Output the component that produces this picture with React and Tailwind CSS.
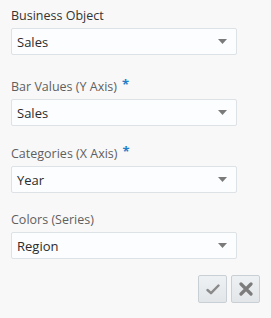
export default function App() {
  const Field = ({ label, value, required, dark, className }) => (
    <div className={className}>
      <div
        className={`flex items-start text-[12.5px] leading-[17px] ${dark ? "text-[#333333]" : "text-[#5f5f5f]"}`}
      >
        <span>{label}</span>
        {required && <span className="ml-[5px] text-[#1f7fc8] text-[13px] leading-[13px] font-bold">*</span>}
      </div>
      <div className="mt-[4px] w-[226px] h-[27px] bg-[#fcfdff] border border-[#dde2e6] rounded-[2px] flex items-center justify-between pl-[5px] pr-[9px]">
        <span className="text-[13px] text-[#2b2b2b] leading-[18px]">{value}</span>
        <svg width="9" height="5" viewBox="0 0 9 5">
          <path d="M0 0 L9 0 L4.5 5 Z" fill="#7a7a7a" />
        </svg>
      </div>
    </div>
  );

  return (
    <div
      className="w-[271px] h-[318px] bg-[#f8f8f8] pl-[11px] pt-[7px]"
      style={{ fontFamily: '"Open Sans", "Noto Sans", sans-serif' }}
    >
      <Field label="Business Object" value="Sales" dark />
      <Field className="mt-[23px]" label="Bar Values (Y Axis)" value="Sales" required />
      <Field className="mt-[19px]" label="Categories (X Axis)" value="Year" required />
      <Field className="mt-[18px]" label="Colors (Series)" value="Region" />
      <div className="flex justify-end gap-[4px] w-[249px] mt-[16px]">
        <button className="w-[29px] h-[28px] rounded-[2px] border border-[#c9d0d5] bg-gradient-to-b from-[#eef1f3] to-[#e2e6e9] flex items-center justify-center">
          <svg width="14" height="11" viewBox="0 0 14 11">
            <path d="M1.5 6 L5 9.2 L12.5 1.5" fill="none" stroke="#8a8a8a" strokeWidth="2.4" strokeLinecap="round" strokeLinejoin="round" />
          </svg>
        </button>
        <button className="w-[29px] h-[28px] rounded-[2px] border border-[#c9d0d5] bg-gradient-to-b from-[#eef1f3] to-[#e2e6e9] flex items-center justify-center">
          <svg width="14" height="14" viewBox="0 0 14 14">
            <path d="M2 2 L12 12 M12 2 L2 12" fill="none" stroke="#7c7c7c" strokeWidth="3.2" strokeLinecap="round" />
          </svg>
        </button>
      </div>
    </div>
  );
}
